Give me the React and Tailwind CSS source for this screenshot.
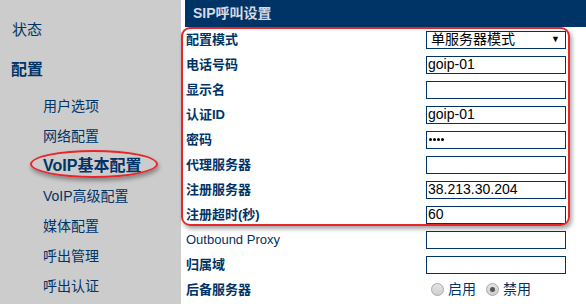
import React from 'react';

const navy = 'text-[#003366]';

const menu = [
  { label: '用户选项' },
  { label: '网络配置' },
  { label: 'VoIP基本配置', active: true },
  { label: 'VoIP高级配置' },
  { label: '媒体配置' },
  { label: '呼出管理' },
  { label: '呼出认证' },
];

const rows = [
  { label: '配置模式', type: 'select', value: '单服务器模式' },
  { label: '电话号码', value: 'goip-01' },
  { label: '显示名', value: '' },
  { label: '认证ID', value: 'goip-01' },
  { label: '密码', value: '', pwd: 4 },
  { label: '代理服务器', value: '' },
  { label: '注册服务器', value: '38.213.30.204' },
  { label: '注册超时(秒)', value: '60' },
  { label: 'Outbound Proxy', value: '', plain: true },
  { label: '归属域', value: '' },
  { label: '后备服务器', type: 'radio' },
];

const Radio = ({ checked }) => (
  <span className="w-[13px] h-[13px] rounded-full border border-[#a8a8a8] bg-gradient-to-b from-[#e4e4e4] to-[#cfcfcf] flex items-center justify-center">
    {checked && <span className="w-[5px] h-[5px] rounded-full bg-[#555]" />}
  </span>
);

const App = () => {
  return (
    <div className="relative w-[586px] h-[304px] overflow-hidden bg-white flex font-['Liberation_Sans','Noto_Sans_CJK_SC',sans-serif]">
      {/* 左侧菜单 */}
      <div className={`w-[181px] h-full bg-[#cccccc] pt-[15px] ${navy}`}>
        <div className="h-[30px] flex items-center pl-[12px] text-[15px]">状态</div>
        <div className="h-[30px] mt-[10px] flex items-center pl-[11px] text-[16px] font-bold">配置</div>
        <div className="mt-[6px]">
          {menu.map((m) => (
            <div
              key={m.label}
              className={`h-[30px] flex items-center pl-[43px] ${m.active ? 'text-[16px] font-bold' : 'text-[14px]'}`}
            >
              {m.label}
            </div>
          ))}
        </div>
      </div>

      {/* 右侧内容 */}
      <div className="flex-1 pl-[4px]">
        <div className="h-[27px] bg-[#003366] flex items-center pl-[8px] text-[14px] font-bold text-[#d9d9e3]">
          SIP呼叫设置
        </div>
        <div>
          {rows.map((r) => (
            <div key={r.label} className="h-[25px] flex items-center">
              <div className={`w-[241px] pl-[1px] text-[13px] ${navy} ${r.plain ? '' : 'font-bold'}`}>
                {r.label}
              </div>
              {r.type === 'select' && (
                <div className="w-[140px] h-[18px] border border-[#003366] bg-white flex items-center justify-between pl-[4px] pr-[5px] text-[14px] text-black">
                  <span>{r.value}</span>
                  <span className="text-[9px]">▼</span>
                </div>
              )}
              {r.type === 'radio' && (
                <div className="flex items-center pl-[5px] text-[14px] text-[#003366]">
                  <Radio />
                  <span className="ml-[4px] mr-[10px]">启用</span>
                  <Radio checked />
                  <span className="ml-[4px]">禁用</span>
                </div>
              )}
              {!r.type && (
                <div className="w-[140px] h-[18px] border border-[#003366] bg-white flex items-center pl-[1px] text-[14px] text-black">
                  {r.value}
                  {r.pwd && (
                    <span className="flex gap-[1px] pl-[1px]">
                      {Array.from({ length: r.pwd }).map((_, i) => (
                        <span key={i} className="w-[3px] h-[3px] rounded-full bg-black" />
                      ))}
                    </span>
                  )}
                </div>
              )}
            </div>
          ))}
        </div>
      </div>

      {/* 红色标注 */}
      <div className="absolute left-[181px] top-[27px] w-[389px] h-[199px] border-2 border-[#e8262a] rounded-[9px] shadow-[2px_3px_4px_rgba(0,0,0,0.35)] pointer-events-none" />
      <div className="absolute left-[30px] top-[150px] w-[128px] h-[28px] border-2 border-[#e8262a] rounded-[50%] shadow-[1px_3px_4px_rgba(0,0,0,0.35)] pointer-events-none" />
    </div>
  );
};

export default App;
